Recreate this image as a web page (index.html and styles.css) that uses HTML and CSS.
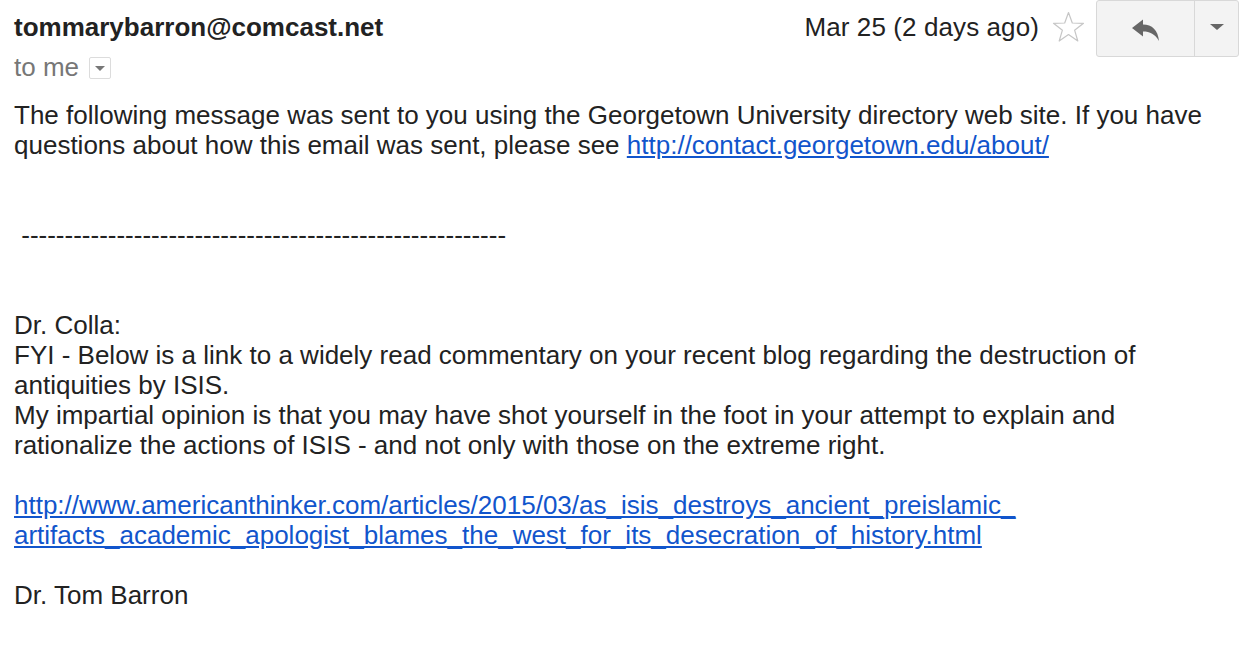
FILE: index.html
```html
<!DOCTYPE html>
<html>
<head>
<meta charset="utf-8">
<link rel="stylesheet" href="styles.css">
</head>
<body>
<div class="mail">
  <div class="head">
    <div class="who">
      <div class="sender">tommarybarron@comcast.net</div>
      <div class="to">to me <span class="tobox"><span class="tocaret"></span></span></div>
    </div>
    <div class="meta">
      <span class="date">Mar 25 (2 days ago)</span>
      <svg class="star" width="33" height="32" viewBox="0 0 33 32"><path d="M16.5 1.5 L20.3 12 L31.5 12.3 L22.6 19.2 L25.8 30 L16.5 23.6 L7.2 30 L10.4 19.2 L1.5 12.3 L12.7 12 Z" fill="none" stroke="#c6c6c6" stroke-width="1.2" stroke-linejoin="round"/></svg>
      <div class="btns">
        <div class="btn reply">
          <svg width="30" height="24" viewBox="0 0 30 24"><path d="M1 9 L12 0.5 L12 5.5 C21 5.5 27 11 28 22 C24 15 19 12.5 12 12.5 L12 17.5 Z" fill="#666"/></svg>
        </div>
        <div class="btn more"><span class="caret"></span></div>
      </div>
    </div>
  </div>
  <div class="body">
    <div>The following message was sent to you using the Georgetown University directory web site. If you have questions about how this email was sent, please see <a href="#">http://contact.georgetown.edu/about/</a></div>
    <div class="blank"></div>
    <div class="blank"></div>
    <div class="dashes">&nbsp;--------------------------------------------------------</div>
    <div class="blank"></div>
    <div class="blank"></div>
    <div>Dr. Colla:</div>
    <div>FYI - Below is a link to a widely read commentary on your recent blog regarding the destruction of antiquities by ISIS.</div>
    <div>My impartial opinion is that you may have shot yourself in the foot in your attempt to explain and rationalize the actions of ISIS - and not only with those on the extreme right.</div>
    <div class="blank"></div>
    <div><a href="#">http://www.americanthinker.com/articles/2015/03/as_isis_destroys_ancient_preislamic_<br>artifacts_academic_apologist_blames_the_west_for_its_desecration_of_history.html</a></div>
    <div class="blank"></div>
    <div>Dr. Tom Barron</div>
  </div>
</div>
</body>
</html>
```
FILE: styles.css
```css
html, body {
  margin: 0;
  padding: 0;
  background: #fff;
}
body {
  font-family: "Liberation Sans", Arial, Helvetica, sans-serif;
  color: #222;
  font-size: 26px;
  line-height: 30px;
}
.mail {
  padding: 0 5px 0 14px;
}
.head {
  display: flex;
  justify-content: space-between;
  align-items: flex-start;
  height: 100px;
}
.who {
  padding-top: 12px;
}
.sender {
  font-weight: bold;
  color: #222;
}
.to {
  margin-top: 10px;
  color: #777;
  display: flex;
  align-items: center;
  gap: 10px;
}
.tobox {
  width: 22px;
  height: 22px;
  border: 1px solid #dcdcdc;
  border-radius: 2px;
  box-sizing: border-box;
  display: inline-flex;
  align-items: center;
  justify-content: center;
  margin-top: 2px;
}
.tocaret {
  width: 0;
  height: 0;
  border-left: 5px solid transparent;
  border-right: 5px solid transparent;
  border-top: 5px solid #777;
}
.meta {
  display: flex;
  align-items: flex-start;
}
.date {
  margin-top: 12px;
  color: #222;
  letter-spacing: 0.1px;
}
.star {
  margin: 11px 11px 0 13px;
}
.btns {
  display: flex;
  height: 57px;
  margin-top: 0;
  border: 1px solid #d8d8d8;
  border-radius: 3px;
  background: #f3f3f3;
  box-sizing: border-box;
}
.btn {
  display: flex;
  align-items: center;
  justify-content: center;
}
.reply {
  width: 97px;
  border-right: 1px solid #d8d8d8;
}
.reply svg {
  margin-top: 4px;
}
.more {
  width: 43px;
}
.caret {
  width: 0;
  height: 0;
  border-left: 7px solid transparent;
  border-right: 7px solid transparent;
  border-top: 6px solid #666;
  margin-bottom: 4px;
}
.body {
  padding-right: 10px;
}
.blank {
  height: 30px;
}
a {
  color: #1155cc;
  text-decoration: underline;
}
```
